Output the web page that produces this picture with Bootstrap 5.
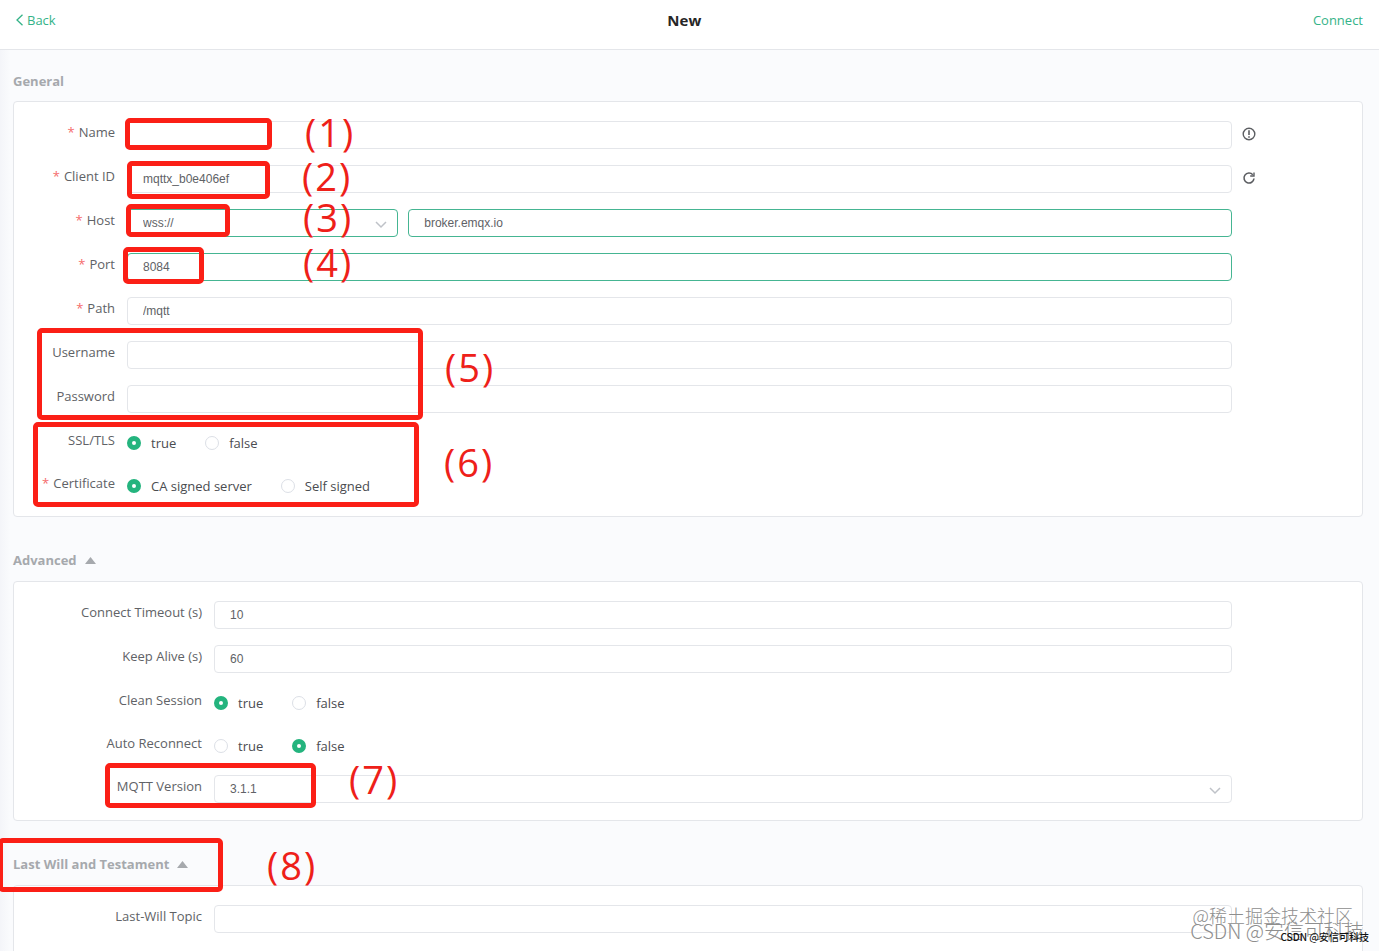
<!DOCTYPE html>
<html lang="en">
<head>
<meta charset="utf-8">
<meta name="viewport" content="width=device-width, initial-scale=1">
<title>New connection</title>
<link href="https://cdn.jsdelivr.net/npm/bootstrap@5.3.0/dist/css/bootstrap.min.css" rel="stylesheet">
<style>
  :root { --green: #34b388; --line: #e4e6ea; --ink: #606266; }
  body { font: 13px/20px "Open Sans", "Noto Sans", "Noto Sans CJK SC", sans-serif; color: var(--ink); background: #fafbfd; }
  .app { background: linear-gradient(90deg, #f4f5f9, #fafbfd 10px); }
  .topbar { height: 50px; padding: 10px 16px 0; background: #fff; border-bottom: 1px solid var(--line); }
  .topbar a { color: var(--green); text-decoration: none; }
  .topbar h1 { font-size: 15px; line-height: 20px; font-weight: 700; color: #262626; }
  .sheet { padding: 21px 16px 0 13px; }
  .group-title { font-size: 13px; line-height: 20px; font-weight: 700; color: #a6a9ad; margin: 0 0 11px; }
  .group-title:first-child { margin-bottom: 10px; }
  .group-title button { all: unset; cursor: pointer; }
  .panel { background: #fff; border: 1px solid var(--line); border-radius: 4px; padding: 19px 0 1px; margin-bottom: 33px; --label: 101px; }
  .panel.wide { --label: 188px; }
  .panel.last { padding-bottom: 60px; }
  .line { display: grid; grid-template-columns: var(--label) minmax(0, 1fr) 118px; column-gap: 12px; margin-bottom: 16px; min-height: 27px; }
  .caption { text-align: right; line-height: 22px; white-space: nowrap; }
  .req::before { content: "*"; color: #f56c6c; margin-right: 4px; }
  .line .form-control, .line .form-select { height: 28px; min-height: 28px; padding: 0 15px; font: 12px/26px "Liberation Sans", sans-serif; color: var(--ink); border: 1px solid var(--line); border-radius: 4px; box-shadow: none; }
  .line .form-select { background: #fff; appearance: none; }
  .line .on { border-color: #45b592; }
  .pick { position: relative; }
  .pick svg { position: absolute; right: 11px; top: 11px; pointer-events: none; }
  .host { display: grid; grid-template-columns: calc(25% - 5px) minmax(0, 1fr); gap: 10px; }
  .choices { display: flex; align-items: center; gap: 29px; height: 27px; }
  .choices label { display: flex; align-items: center; gap: 10px; font-weight: 500; line-height: 20px; color: #4a4c50; }
  .choices .form-check-input { width: 14px; height: 14px; margin: 0; border: 1px solid #dcdfe6; background-image: none; box-shadow: none; }
  .choices .form-check-input:checked { border: 5px solid #24b47e; background: #fff; }
  .tool { border: 0; background: none; padding: 0; width: 14px; height: 26px; margin-left: -2px; display: flex; align-items: center; }
  .frame { position: absolute; border: 5px solid #fb1f16; border-radius: 5px; pointer-events: none; }
  .num { position: absolute; display: flex; gap: 2px; color: #ee2019; font-size: 38px; line-height: 40px; white-space: nowrap; pointer-events: none; }
  .stamp { position: absolute; line-height: 20px; white-space: nowrap; pointer-events: none; font-family: "Noto Sans CJK SC", sans-serif; font-size: 10px; font-weight: 500; color: #111; }
  .stamp.pale { color: #8e8e8e; font-weight: 300; text-shadow: 1px 1px #fff; }
</style>
</head>
<body>
<div class="app position-relative vh-100 overflow-hidden">
  <header class="topbar d-flex align-items-start justify-content-between">
    <a href="#" class="d-inline-flex align-items-center"><svg width="11" height="12" viewBox="0 0 11 12" fill="none" stroke="currentColor" stroke-width="1.3"><path d="M6.500 .8 1 6l5.500 5.200"/></svg>Back</a>
    <h1 class="m-0">New</h1>
    <a href="#">Connect</a>
  </header>

  <main class="sheet">
    <h2 class="group-title">General</h2>
    <section class="panel">
      <div class="line"><label class="caption req" for="name">Name</label><input id="name" class="form-control" type="text">
        <button class="tool" aria-label="Information"><svg width="14" height="14" viewBox="0 0 14 14" fill="none" stroke="#5c5e62" stroke-width="1.4"><circle cx="7" cy="7" r="5.800"/><path d="M7 3.300v4.700M7 9.200v1.500" stroke-width="1.600"/></svg></button></div>
      <div class="line"><label class="caption req" for="client">Client ID</label><input id="client" class="form-control" type="text" value="mqttx_b0e406ef">
        <button class="tool" aria-label="Refresh"><svg width="14" height="14" viewBox="0 0 14 14" fill="none" stroke="#5c5e62" stroke-width="1.600"><path d="M12 7.500A5 5 0 1 1 10.800 3.700"/><path d="M12 1.500V5H8.200" stroke-width="1.400"/></svg></button></div>
      <div class="line"><label class="caption req" for="host">Host</label>
        <div class="host">
          <div class="pick"><select class="form-select on" aria-label="Protocol"><option>wss://</option></select><svg width="12" height="9" viewBox="0 0 12 9" fill="none" stroke="#bfc2c8" stroke-width="1.500"><path d="m1 2 5 5 5-5"/></svg></div>
          <input id="host" class="form-control on" type="text" value="broker.emqx.io">
        </div></div>
      <div class="line"><label class="caption req" for="port">Port</label><input id="port" class="form-control on" type="text" value="8084"></div>
      <div class="line"><label class="caption req" for="path">Path</label><input id="path" class="form-control" type="text" value="/mqtt"></div>
      <div class="line"><label class="caption" for="user">Username</label><input id="user" class="form-control" type="text"></div>
      <div class="line"><label class="caption" for="pass">Password</label><input id="pass" class="form-control" type="password"></div>
      <div class="line"><span class="caption">SSL/TLS</span>
        <div class="choices"><label><input class="form-check-input" type="radio" name="ssl" checked>true</label><label><input class="form-check-input" type="radio" name="ssl">false</label></div></div>
      <div class="line"><span class="caption req">Certificate</span>
        <div class="choices"><label><input class="form-check-input" type="radio" name="cert" checked>CA signed server</label><label><input class="form-check-input" type="radio" name="cert">Self signed</label></div></div>
    </section>

    <h2 class="group-title"><button class="d-flex align-items-center gap-2">Advanced<svg width="11" height="7" viewBox="0 0 11 7" fill="#a6a9ad"><path d="M5.500 0 11 7H0z"/></svg></button></h2>
    <section class="panel wide">
      <div class="line"><label class="caption" for="timeout">Connect Timeout (s)</label><input id="timeout" class="form-control" type="text" value="10"></div>
      <div class="line"><label class="caption" for="alive">Keep Alive (s)</label><input id="alive" class="form-control" type="text" value="60"></div>
      <div class="line"><span class="caption">Clean Session</span>
        <div class="choices"><label><input class="form-check-input" type="radio" name="clean" checked>true</label><label><input class="form-check-input" type="radio" name="clean">false</label></div></div>
      <div class="line"><span class="caption">Auto Reconnect</span>
        <div class="choices"><label><input class="form-check-input" type="radio" name="auto">true</label><label><input class="form-check-input" type="radio" name="auto" checked>false</label></div></div>
      <div class="line"><label class="caption" for="version">MQTT Version</label>
        <div class="pick"><select id="version" class="form-select"><option>3.1.1</option></select><svg width="12" height="9" viewBox="0 0 12 9" fill="none" stroke="#bfc2c8" stroke-width="1.500"><path d="m1 2 5 5 5-5"/></svg></div></div>
    </section>

    <h2 class="group-title"><button class="d-flex align-items-center gap-2">Last Will and Testament<svg width="11" height="7" viewBox="0 0 11 7" fill="#a6a9ad"><path d="M5.500 0 11 7H0z"/></svg></button></h2>
    <section class="panel wide last">
      <div class="line"><label class="caption" for="topic">Last-Will Topic</label><input id="topic" class="form-control" type="text"></div>
    </section>
  </main>

  <!-- numbered callouts laid over the form -->
  <div class="frame" style="left:125px;top:118px;width:147px;height:32px"></div>
  <div class="frame" style="left:127px;top:161px;width:143px;height:38px"></div>
  <div class="frame" style="left:126px;top:204px;width:104px;height:33px"></div>
  <div class="frame" style="left:123px;top:247px;width:81px;height:37px"></div>
  <div class="frame" style="left:37px;top:328px;width:386px;height:92px"></div>
  <div class="frame" style="left:33px;top:422px;width:386px;height:85px"></div>
  <div class="frame" style="left:105px;top:763px;width:211px;height:45px"></div>
  <div class="frame" style="left:-2px;top:838px;width:225px;height:54px"></div>
  <div class="num" style="left:305px;top:112px"><span>(</span><span>1</span><span>)</span></div>
  <div class="num" style="left:302px;top:156px"><span>(</span><span>2</span><span>)</span></div>
  <div class="num" style="left:303px;top:197px"><span>(</span><span>3</span><span>)</span></div>
  <div class="num" style="left:303px;top:242px"><span>(</span><span>4</span><span>)</span></div>
  <div class="num" style="left:445px;top:347px"><span>(</span><span>5</span><span>)</span></div>
  <div class="num" style="left:444px;top:442px"><span>(</span><span>6</span><span>)</span></div>
  <div class="num" style="left:349px;top:759px"><span>(</span><span>7</span><span>)</span></div>
  <div class="num" style="left:267px;top:845px"><span>(</span><span>8</span><span>)</span></div>

  <div class="stamp pale" style="right:26px;bottom:26px;font-size:18px">@稀土掘金技术社区</div>
  <div class="stamp pale" style="right:15px;bottom:10px;font-size:20px">CSDN @安信可科技</div>
  <div class="stamp" style="right:10px;bottom:4px">CSDN @安信可科技</div>
</div>
<script src="https://cdn.jsdelivr.net/npm/bootstrap@5.3.0/dist/js/bootstrap.bundle.min.js"></script>
</body>
</html>
